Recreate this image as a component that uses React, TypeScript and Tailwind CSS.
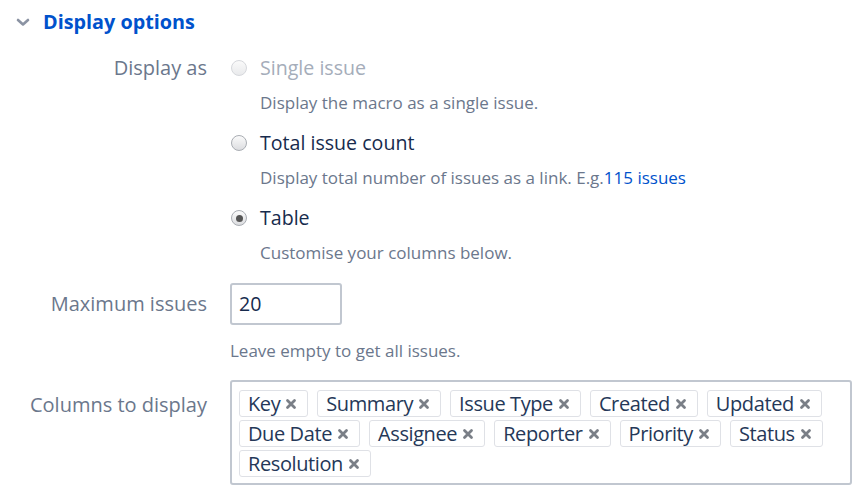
import React from "react";

const tags = [
  "Key",
  "Summary",
  "Issue Type",
  "Created",
  "Updated",
  "Due Date",
  "Assignee",
  "Reporter",
  "Priority",
  "Status",
  "Resolution",
];

function Radio({ checked, disabled }: { checked?: boolean; disabled?: boolean }) {
  return (
    <span
      className={`relative inline-flex h-[16px] w-[16px] shrink-0 items-center justify-center rounded-full border ${
        disabled ? "border-[#d6d8dc] bg-gradient-to-b from-[#fafafa] to-[#e9eaec]" : "border-[#a9adb3] bg-gradient-to-b from-[#fbfbfb] to-[#dcdde0]"
      }`}
    >
      {checked && <span className="h-[7px] w-[7px] rounded-full bg-[#555]" />}
    </span>
  );
}

function Option({
  label,
  desc,
  checked,
  disabled,
}: {
  label: string;
  desc: React.ReactNode;
  checked?: boolean;
  disabled?: boolean;
}) {
  return (
    <div className="mb-[13px]">
      <div className="flex h-[30px] items-center">
        <Radio checked={checked} disabled={disabled} />
        <span className={`ml-[13px] text-[19.6px] ${disabled ? "text-[#a5adba]" : "text-[#172b4d]"}`}>{label}</span>
      </div>
      <div className="mt-[8px] flex h-[24px] items-center whitespace-nowrap pl-[29px] text-[17px] text-[#6b778c]">{desc}</div>
    </div>
  );
}

export default function App() {
  return (
    <div
      className="h-[488px] w-[863px] overflow-hidden bg-white"
      style={{ fontFamily: '"Open Sans", "Noto Sans", sans-serif' }}
    >
      <div className="flex h-[44px] items-center pl-[16px]">
        <svg width="14" height="9" viewBox="0 0 14 9" className="mr-[13px]">
          <path d="M2 2 L7 6.5 L12 2" fill="none" stroke="#8b93a3" strokeWidth="2.6" strokeLinecap="round" strokeLinejoin="round" />
        </svg>
        <span className="text-[19.8px] font-bold text-[#0052cc]">Display options</span>
      </div>

      <div className="mt-[9px] flex">
        <div className="w-[207px] shrink-0 text-right text-[20px] leading-[30px] text-[#6b778c]">Display as</div>
        <div className="ml-[24px]">
          <Option label="Single issue" desc="Display the macro as a single issue." disabled />
          <Option
            label="Total issue count"
            desc={
              <span>
                Display total number of issues as a link. E.g.<span className="text-[#0052cc]">115 issues</span>
              </span>
            }
          />
          <Option label="Table" desc="Customise your columns below." checked />
        </div>
      </div>

      <div className="mt-[5px] flex items-center">
        <div className="w-[207px] shrink-0 text-right text-[20px] text-[#6b778c]">Maximum issues</div>
        <div className="ml-[23px] flex h-[42px] w-[112px] items-center rounded-[3px] border-2 border-[#c1c7d0] px-[7px] text-[19.6px] text-[#172b4d]">
          20
        </div>
      </div>
      <div className="mt-[14px] flex h-[24px] items-center pl-[230px] text-[17px] text-[#6b778c]">
        Leave empty to get all issues.
      </div>

      <div className="mt-[17px] flex">
        <div className="w-[207px] shrink-0 pt-[10px] text-right text-[20px] text-[#6b778c]">Columns to display</div>
        <div className="ml-[23px] h-[105px] w-[622px] rounded-[3px] border-2 border-[#c1c7d0] px-[7px] pt-[8px]">
          <div className="flex flex-wrap gap-x-[9px] gap-y-[3px]">
            {tags.map((t) => (
              <span
                key={t}
                className="flex h-[27px] items-center rounded-[3px] border border-[#dfe1e6] pl-[8px] pr-[10px] text-[20px] tracking-[-0.4px] text-[#253858]"
              >
                {t}
                <svg width="12" height="12" viewBox="0 0 12 12" className="ml-[5px] mt-[1px]">
                  <path d="M2.5 2.5 L9.5 9.5 M9.5 2.5 L2.5 9.5" stroke="#7a7f87" strokeWidth="2.8" strokeLinecap="round" />
                </svg>
              </span>
            ))}
          </div>
        </div>
      </div>
    </div>
  );
}
